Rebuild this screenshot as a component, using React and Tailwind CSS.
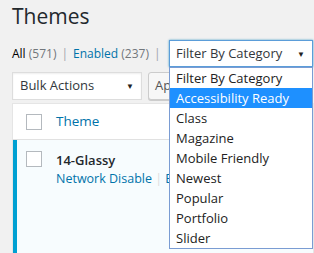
import React from 'react';

const categories = [
    'Filter By Category',
    'Accessibility Ready',
    'Class',
    'Magazine',
    'Mobile Friendly',
    'Newest',
    'Popular',
    'Portfolio',
    'Slider',
];

export default function App() {
    const [selected] = React.useState(1);

    return (
    <div className="relative w-[314px] h-[253px] overflow-hidden bg-[#f1f1f1] text-[#23282d] font-['Open_Sans',sans-serif]">
        <h1 className="pl-3 pt-[2px] text-[21px] leading-[28px] font-normal">Themes</h1>

        <div className="flex items-center h-[27px] mt-[10px] text-[12px] whitespace-nowrap">
            <ul className="flex-1 min-w-0 flex items-center pl-3 text-[#72777c]">
                <li>
                    <span className="text-[#000]">All</span> (571)
                    <span className="mx-[5px] text-[#a0a5aa]">|</span>
                </li>
                <li>
                    <span className="text-[#0073aa]">Enabled <span className="text-[#72777c]">(237)</span></span>
                    <span className="ml-[5px] text-[#a0a5aa]">|</span>
                </li>
            </ul>
            <div className="mr-[1px] w-[144px] flex-none h-[27px] flex items-center justify-between pl-[6px] pr-[7px] bg-white border border-[#5b9dd9] shadow-[0_0_2px_rgba(30,140,190,0.8)] text-[13px] text-[#32373c]">
                <span>Filter By Category</span>
                <span className="text-[8px] text-[#222]">▼</span>
            </div>
        </div>

        <div className="flex items-center gap-[6px] pl-3 mt-[5px] whitespace-nowrap">
            <div className="w-[130px] h-[28px] flex items-center justify-between pl-[7px] pr-[7px] bg-white border border-[#ddd] shadow-[inset_0_1px_2px_rgba(0,0,0,0.07)] text-[13px] text-[#32373c]">
                <span>Bulk Actions</span>
                <span className="text-[8px] text-[#222]">▼</span>
            </div>
            <button type="button" className="h-[28px] px-[6px] bg-[#f7f7f7] border border-[#ccc] rounded-[3px] shadow-[0_1px_0_#ccc] text-[13px] text-[#555]">
                Apply
            </button>
        </div>

        <div className="ml-3 mt-[3px] bg-white border border-[#e5e5e5] whitespace-nowrap">
            <div className="flex items-center h-[36px] border-b border-[#e1e1e1]">
                <span className="ml-[13px] w-4 h-4 border border-[#b4b9be] bg-white"></span>
                <span className="ml-[14px] text-[13.5px] text-[#0073aa]">Theme</span>
            </div>
            <div className="flex bg-[#f7fcfe] border-l-4 border-[#00a0d2] h-[120px]">
                <span className="ml-[9px] mt-[11px] w-4 h-4 border border-[#b4b9be] bg-white"></span>
                <div className="ml-[14px] mt-[10px]">
                    <div className="text-[13px] font-semibold leading-[20px]">14-Glassy</div>
                    <div className="text-[12.5px] leading-[18px] text-[#0073aa]">
                        Network Disable <span className="text-[#ddd]">|</span> Edit
                    </div>
                </div>
            </div>
        </div>

        <ul className="absolute left-[169px] top-[67px] w-[144px] bg-white border border-[#7a9cd3] text-[13px] text-[#222] whitespace-nowrap">
            {categories.map((name, i) => (
                <li key={name}
                    className={i === selected
                        ? 'h-[20px] leading-[20px] pl-[6px] bg-[#1e90ff] text-white'
                        : 'h-[20px] leading-[20px] pl-[6px]'}>
                    {name}
                </li>
            ))}
        </ul>
    </div>
    )
}
